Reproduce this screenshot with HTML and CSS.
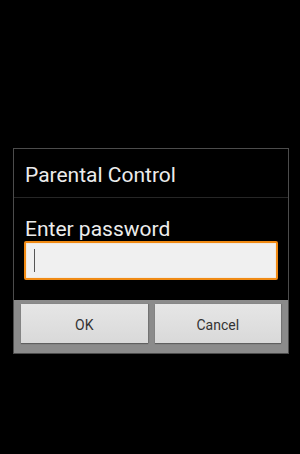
FILE: index.html
```html
<!DOCTYPE html>
<html>
<head>
<meta charset="utf-8">
<link rel="stylesheet" href="styles.css">
</head>
<body>
<div class="dialog">
  <div class="title">Parental Control</div>
  <div class="content">
    <div class="label">Enter password</div>
    <div class="input"><span class="cursor"></span></div>
  </div>
  <div class="buttons">
    <div class="btn">OK</div>
    <div class="btn">Cancel</div>
  </div>
</div>
</body>
</html>
```
FILE: styles.css
```css
html, body {
  margin: 0;
  padding: 0;
  background: #000;
  width: 300px;
  height: 454px;
  overflow: hidden;
  font-family: Roboto, "Noto Sans", sans-serif;
}
.dialog {
  margin: 148px 0 0 13px;
  width: 274px;
  border: 1px solid #4c4c4c;
  background: #000;
}
.title {
  height: 49px;
  box-sizing: border-box;
  border-bottom: 1px solid #262626;
  color: #ececec;
  font-size: 21px;
  line-height: 44px;
  padding-left: 11px;
  padding-top: 4px;
}
.content {
  padding: 0 10px 0 10px;
  height: 102px;
  box-sizing: border-box;
}
.label {
  color: #ececec;
  font-size: 21px;
  line-height: 24px;
  padding: 19px 0 0 1px;
}
.input {
  margin-top: 0;
  height: 35px;
  border: 2px solid #f08a14;
  border-radius: 2px;
  background: #f0f0f0;
  display: flex;
  align-items: center;
  padding-left: 8px;
  box-shadow: inset 0 0 1px #ffa94a;
}
.cursor {
  width: 1px;
  height: 23px;
  background: #555;
}
.buttons {
  background: #8b8b8b;
  display: flex;
  gap: 7px;
  padding: 4px 7px 10px 7px;
}
.btn {
  flex: 1;
  height: 39px;
  padding-top: 2px;
  box-sizing: border-box;
  background: linear-gradient(#e6e6e6, #d9d9d9);
  box-shadow: 0 1px 1px #5f5f5f, 1px 0 1px #777;
  color: #333;
  font-size: 14px;
  display: flex;
  align-items: center;
  justify-content: center;
}
```
